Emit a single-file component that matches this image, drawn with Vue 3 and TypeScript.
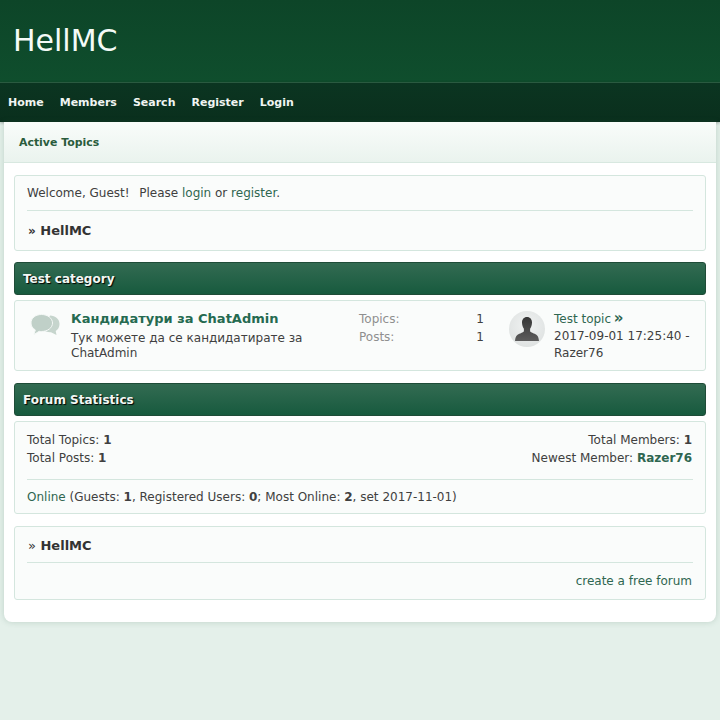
<template>
  <div class="page">
    <header class="banner">
      <div class="site-title">HellMC</div>
    </header>
    <nav class="menu">
      <a v-for="item in menu" :key="item">{{ item }}</a>
    </nav>

    <main class="panel">
      <div class="tabs"><a>Active Topics</a></div>

      <div class="content">
        <section class="box welcome">
          <div class="welcome-line">
            <span class="greet">Welcome, Guest!</span>&nbsp;&nbsp;Please <a>login</a> or <a>register</a>.
          </div>
          <div class="crumb"><span class="raquo bold">»</span> HellMC</div>
        </section>

        <h2 class="cat first">Test category</h2>
        <section class="box board">
          <svg class="board-icon" width="32" height="26" viewBox="0 0 32 26">
            <path d="M20 2.500c5.500 0 9.500 3.600 9.500 8.500 0 3.200-1.500 5.600-3.800 7.100l.8 4-5.500-2.900c-3.500.2-6-.8-8-2.700z" fill="#c6d5cd"/>
            <path d="M11.500 1.500c6.200 0 11 3.800 11 8.500s-4.800 8.500-11 8.500c-.8 0-1.600 0-2.300-.2L4 21.500l1.300-4.600C2.500 15.300 1 12.800 1 10 1 5.300 5.300 1.500 11.500 1.500z" fill="#c0d0c8" stroke="#f4f8f6" stroke-width="1"/>
          </svg>
          <div class="board-info">
            <a class="board-name">Кандидатури за ChatAdmin</a>
            <div class="board-desc">Тук можете да се кандидатирате за ChatAdmin</div>
          </div>
          <div class="board-counts">
            <div class="count"><span>Topics:</span><b>1</b></div>
            <div class="count"><span>Posts:</span><b>1</b></div>
          </div>
          <div class="avatar">
            <svg width="36" height="36" viewBox="0 0 36 36">
              <defs>
                <linearGradient id="sil" x1="0" y1="0" x2="0" y2="1">
                  <stop offset="0" stop-color="#363636"/>
                  <stop offset="1" stop-color="#5c5c5c"/>
                </linearGradient>
              </defs>
              <path d="M18 6c3.200 0 5 2.400 5 5.500 0 2.600-.8 4.800-1.900 6.300v2.200c0 1 1.600 1.700 3.600 2.400 2.600.9 4.800 1.600 5.300 7.600H6c.5-6 2.700-6.700 5.300-7.600 2-.7 3.600-1.400 3.600-2.400v-2.200C13.800 16.300 13 14.100 13 11.500 13 8.400 14.800 6 18 6z" fill="url(#sil)"/>
            </svg>
          </div>
          <div class="last-post">
            <a class="topic">Test topic <span class="go">»</span></a>
            <div>2017-09-01 17:25:40 - Razer76</div>
          </div>
        </section>

        <h2 class="cat">Forum Statistics</h2>
        <section class="box stats">
          <div class="stats-row">
            <div>
              <div>Total Topics: <b>1</b></div>
              <div>Total Posts: <b>1</b></div>
            </div>
            <div class="right">
              <div>Total Members: <b>1</b></div>
              <div>Newest Member: <a class="strong">Razer76</a></div>
            </div>
          </div>
          <div class="online">
            <a>Online</a> (Guests: <b>1</b>, Registered Users: <b>0</b>; Most Online: <b>2</b>, set 2017-11-01)
          </div>
        </section>

        <section class="box footer-box">
          <div class="crumb top"><span class="raquo">»</span> HellMC</div>
          <div class="create"><a>create a free forum</a></div>
        </section>
      </div>
    </main>
  </div>
</template>

<script setup lang="ts">
const menu: string[] = ["Home", "Members", "Search", "Register", "Login"];
</script>

<style>
html,
body {
  background: #e4f0ea;
}
</style>

<style scoped>
.page {
  height: 720px;
  overflow: hidden;
  background: #e4f0ea;
  font-family: "DejaVu Sans", sans-serif;
  font-size: 12px;
  line-height: 18px;
  color: #404040;
}

a {
  color: #2f6650;
}

.banner {
  height: 82px;
  box-sizing: border-box;
  background: linear-gradient(#0d4528, #0f4e2d);
  padding: 22px 13px 0;
}

.site-title {
  font-size: 30px;
  line-height: 38px;
  color: #f4fbf7;
}

.menu {
  height: 40px;
  box-sizing: border-box;
  background: linear-gradient(#0b3521, #0a2f1d);
  border-top: 1px solid #2a5a40;
  display: flex;
  align-items: center;
  padding-left: 8px;
  gap: 16px;
  box-shadow: 0 1px 3px rgba(0, 0, 0, 0.3);
}

.menu a {
  color: #f0f5f2;
  font-size: 11px;
  font-weight: 700;
}

.panel {
  margin: 0 4px;
  background: #fff;
  border-radius: 0 0 8px 8px;
  box-shadow: 0 0 6px rgba(40, 90, 65, 0.2);
}

.tabs {
  height: 41px;
  box-sizing: border-box;
  padding: 11px 15px 0;
  background: linear-gradient(#f9fcfa, #eaf3ee);
  border-bottom: 1px solid #d8e8e0;
}

.tabs a {
  color: #2a5c3c;
  font-size: 10.92px;
  font-weight: 700;
}

.content {
  padding: 12px 10px 22px;
}

.box {
  background: #fafcfb;
  border: 1px solid #d4e6de;
  border-radius: 3px;
  box-sizing: border-box;
}

.welcome {
  height: 76px;
  padding: 8px 12px 0;
}

.greet {
  margin-right: 2px;
}

.welcome-line {
  padding-bottom: 8px;
  border-bottom: 1px solid #d4e6de;
}

.crumb {
  padding: 11px 1px 0;
  font-size: 13px;
  font-weight: 700;
  color: #333;
}

.raquo {
  font-weight: 400;
  font-size: 13px;
}

.raquo.bold {
  font-weight: 700;
  font-size: 12px;
}

.cat {
  margin: 12px 0 5px;
  height: 33px;
  box-sizing: border-box;
  padding: 7px 8px;
  background: linear-gradient(#336b52, #175a3e);
  border: 1px solid #1f4c38;
  border-radius: 3px;
  color: #f2f7f4;
  font-size: 12px;
  font-weight: 700;
  line-height: 18px;
  text-shadow: 1px 1px 1px #000;
}

.cat.first {
  margin-top: 11px;
}

.board {
  height: 71px;
  display: flex;
  align-items: flex-start;
  padding: 9px 0 0 15px;
}

.board-icon {
  flex: none;
  margin: 3px 9px 0 0;
}

.board-info {
  width: 278px;
  flex: none;
  line-height: 15px;
}

.board-name {
  display: block;
  font-size: 13px;
  font-weight: 700;
  color: #256a50;
  line-height: 18px;
  margin-bottom: 3px;
}

.board-desc {
  width: 250px;
}

.board-counts {
  width: 160px;
  flex: none;
  padding: 0 0 0 10px;
  box-sizing: border-box;
}

.count {
  display: flex;
  justify-content: space-between;
  width: 125px;
}

.count span {
  color: #8f8f8f;
}

.count b {
  font-weight: 400;
}

.avatar {
  flex: none;
  width: 36px;
  height: 36px;
  margin: 1px 9px 0 0;
  border-radius: 50%;
  background: radial-gradient(circle at 50% 40%, #f0f2f2, #dadedd);
  overflow: hidden;
}

.last-post {
  width: 140px;
  flex: none;
  line-height: 17.5px;
}

.topic {
  display: block;
  padding-top: 1px;
  margin-bottom: -1px;
}

.go {
  font-size: 15px;
  font-weight: 700;
  line-height: 1;
  margin-left: -1px;
}

.stats {
  height: 93px;
  padding: 9px 12px 0;
}

.stats-row {
  display: flex;
  justify-content: space-between;
  padding-bottom: 12px;
  border-bottom: 1px solid #d4e6de;
}

.right {
  text-align: right;
  padding-right: 1px;
}

.strong {
  font-weight: 700;
}

.online {
  padding-top: 8px;
}

.footer-box {
  height: 74px;
  margin-top: 12px;
  padding: 0 12px;
}

.crumb.top {
  padding-top: 10px;
  padding-bottom: 7px;
  border-bottom: 1px solid #d4e6de;
}

.create {
  text-align: right;
  padding: 9px 1px 0 0;
}
</style>
